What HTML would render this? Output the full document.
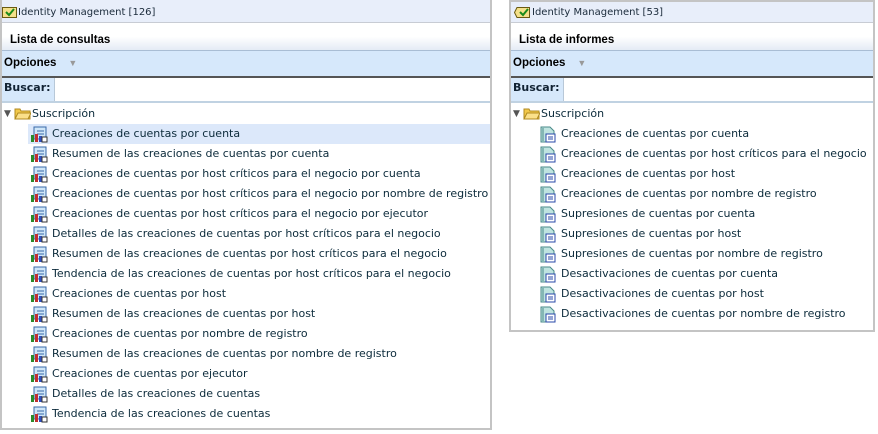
<!DOCTYPE html>
<html><head><meta charset="utf-8"><style>
*{margin:0;padding:0;box-sizing:border-box}
body{width:878px;height:434px;background:#fff;position:relative;overflow:hidden;font-family:"DejaVu Sans",Verdana,sans-serif;color:#0b2a3a}
.p{position:absolute;border:2px solid #c4c4c4;border-top:none;background:#fff;overflow:hidden}
.a{position:absolute}
.title{left:0;right:0;top:0;height:23px;background:#e8eefa;border-bottom:1px solid #c8ccd4;font-size:10px;line-height:25px;padding-left:16px;color:#1a2a3a;white-space:nowrap}
.lista{left:0;right:0;top:23px;height:28px;background:linear-gradient(#fff 0,#fff 50%,#e4ebf5 100%);border-bottom:1px solid #a9bdd4;font:bold 11.5px "Liberation Sans",Arial,sans-serif;color:#000;padding:11px 0 0 8px}
.opc{left:0;right:0;top:51px;height:27px;background:#d6e8fb;border-bottom:2px solid #555;font:bold 11.5px "Liberation Sans",Arial,sans-serif;color:#000;padding:6px 0 0 2px}
.opc span{color:#999;font-size:9px;margin-left:12px}
.bus{left:0;right:0;top:78px;height:25px;background:#d6e8fb;border-bottom:2px solid #c0d2e2;font:bold 11px "DejaVu Sans",Verdana,sans-serif;color:#123;padding:3px 0 0 2px}
.bus i{position:absolute;left:52px;top:0;right:0;bottom:0;background:#fff;border-left:1px solid #b8c8d8}
.row{position:absolute;left:0;right:0;height:20px;font-size:11px;line-height:20px;white-space:nowrap}
.row svg{position:absolute;top:2px}
</style></head><body>

<div class="p" style="left:0;top:0;width:492px;height:430px;border-left:2px solid #c4c4c4">
<div class="a title">Identity Management [126]</div>
<svg class="a" style="left:0;top:7px" width="15" height="11"><rect x="0.5" y="0.5" width="14" height="10" fill="#f4e08a" stroke="#6a5a10"/><path d="M4 5l3 3 5-6" stroke="#1a8a1a" stroke-width="2" fill="none"/></svg>
<div class="a lista">Lista de consultas</div>
<div class="a opc">Opciones<span>▼</span></div>
<div class="a bus">Buscar:<i></i></div>
<div class="a" style="left:26px;right:0;top:124px;height:20px;background:#dce8fa"></div>
<div class="row" style="top:104px;padding-left:30px"><span style="position:absolute;left:2px;font-size:9px;color:#555">▼</span><svg style="left:12px" width="17" height="14"><path d="M1 3h5l1 2h9v8H1z" fill="#f2c84a" stroke="#b08a20"/><path d="M1 13l3-6h13l-3 6z" fill="#fbe08a" stroke="#b08a20"/></svg>Suscripción</div>
<div id="L"></div>
</div>

<div class="p" style="left:509px;top:0;width:366px;height:332px;border-top:2px solid #c4c4c4">
<div class="a title" style="height:21px;line-height:22px;padding-left:21px">Identity Management [53]</div>
<svg class="a" style="left:3px;top:5px" width="16" height="11"><path d="M3 0.5h12.5v10H3L0.5 5.5z" fill="#f4e08a" stroke="#6a5a10"/><path d="M6 5l3 3 5-6" stroke="#1a8a1a" stroke-width="2" fill="none"/></svg>
<div class="a lista" style="top:21px">Lista de informes</div>
<div class="a opc" style="top:49px">Opciones<span>▼</span></div>
<div class="a bus" style="top:76px">Buscar:<i></i></div>
<div class="row" style="top:102px;padding-left:30px"><span style="position:absolute;left:2px;font-size:9px;color:#555">▼</span><svg style="left:12px" width="17" height="14"><path d="M1 3h5l1 2h9v8H1z" fill="#f2c84a" stroke="#b08a20"/><path d="M1 13l3-6h13l-3 6z" fill="#fbe08a" stroke="#b08a20"/></svg>Suscripción</div>
<div id="R"></div>
</div>

<script>
var L=["Creaciones de cuentas por cuenta","Resumen de las creaciones de cuentas por cuenta","Creaciones de cuentas por host críticos para el negocio por cuenta","Creaciones de cuentas por host críticos para el negocio por nombre de registro","Creaciones de cuentas por host críticos para el negocio por ejecutor","Detalles de las creaciones de cuentas por host críticos para el negocio","Resumen de las creaciones de cuentas por host críticos para el negocio","Tendencia de las creaciones de cuentas por host críticos para el negocio","Creaciones de cuentas por host","Resumen de las creaciones de cuentas por host","Creaciones de cuentas por nombre de registro","Resumen de las creaciones de cuentas por nombre de registro","Creaciones de cuentas por ejecutor","Detalles de las creaciones de cuentas","Tendencia de las creaciones de cuentas"];
var R=["Creaciones de cuentas por cuenta","Creaciones de cuentas por host críticos para el negocio","Creaciones de cuentas por host","Creaciones de cuentas por nombre de registro","Supresiones de cuentas por cuenta","Supresiones de cuentas por host","Supresiones de cuentas por nombre de registro","Desactivaciones de cuentas por cuenta","Desactivaciones de cuentas por host","Desactivaciones de cuentas por nombre de registro"];
var iL='<svg style="left:28px" width="18" height="17"><rect x="4" y="1" width="12" height="12" fill="#cfe6f8" stroke="#3a6aa8"/><path d="M7 5h7M7 8h7" stroke="#3a6aa8"/><rect x="1" y="9" width="3" height="7" fill="#2a8a2a"/><rect x="5" y="8" width="3" height="8" fill="#c03030"/><rect x="9" y="10" width="3" height="6" fill="#3050c0"/><rect x="12" y="11" width="5" height="5" fill="#fff" stroke="#333"/></svg>';
var iR='<svg style="left:28px" width="18" height="17"><path d="M2 1h9l4 4v11H2z" fill="#bfe4e0" stroke="#4a8a88"/><path d="M4 2v13" stroke="#4a8a88"/><rect x="7" y="8" width="9" height="8" fill="#fff" stroke="#2a4aa8"/><path d="M9 11h5M9 13h5" stroke="#2a4aa8"/></svg>';
var h='';L.forEach(function(t,i){h+='<div class="row" style="top:'+(124+20*i)+'px;padding-left:50px">'+iL+t+'</div>'});document.getElementById('L').outerHTML=h;
h='';R.forEach(function(t,i){h+='<div class="row" style="top:'+(122+20*i)+'px;padding-left:50px">'+iR+t+'</div>'});document.getElementById('R').outerHTML=h;
</script>
</body></html>
